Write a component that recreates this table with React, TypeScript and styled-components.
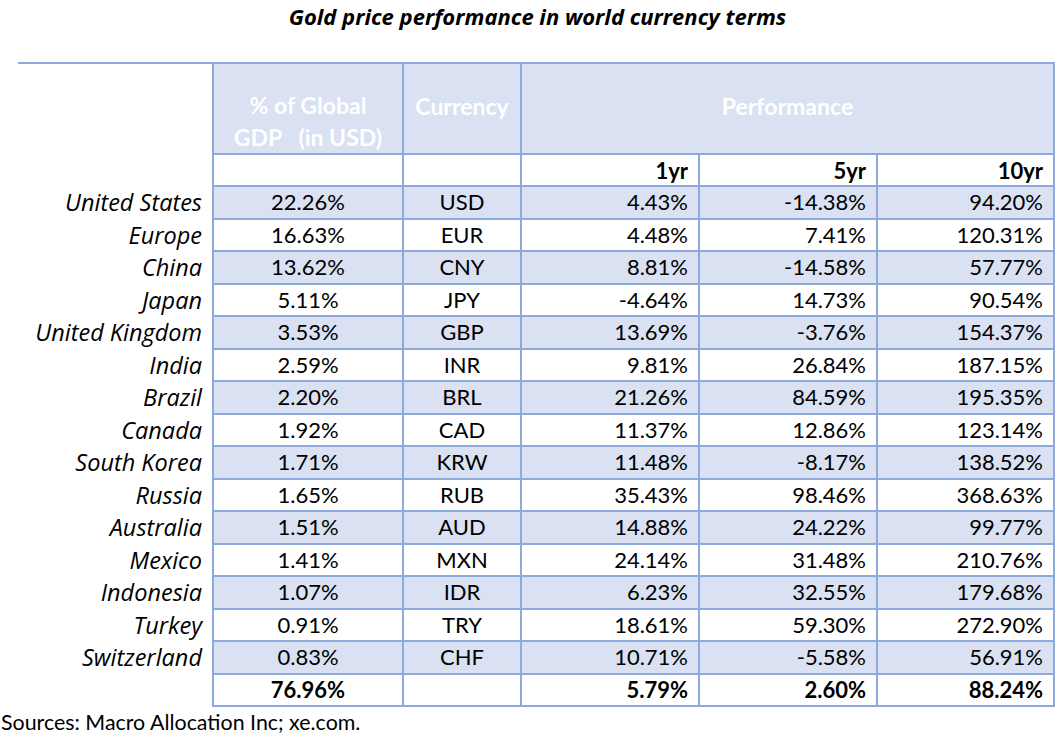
import React from "react";
import styled, { createGlobalStyle } from "styled-components";

const Global = createGlobalStyle`
  html, body { margin: 0; padding: 0; background: #fff; }
  body { font-family: Lato, "Open Sans", "Liberation Sans", sans-serif; color: #000; }
`;

const BORDER = "2px solid #8EA9DB";
const FILL = "#D9E1F2";
const ITALIC_FONT = `"Open Sans", "Noto Sans", Lato, sans-serif`;

const Page = styled.div`
  width: 1061px;
  height: 738px;
  display: flex;
  flex-direction: column;
`;

const Title = styled.h1`
  margin: 0;
  height: 62px;
  padding-top: 2px;
  box-sizing: border-box;
  text-align: center;
  font-family: ${ITALIC_FONT};
  font-size: 22px;
  font-weight: 700;
  font-style: italic;
  line-height: 28px;
  padding-left: 14px;
`;

const Table = styled.table`
  border-collapse: collapse;
  table-layout: fixed;
  width: 1036px;
  margin-left: 18px;
  font-size: 22px;
`;

const HeadRow = styled.tr`
  height: 91px;
`;

const SubRow = styled.tr`
  height: 32px;
`;

const DataRow = styled.tr`
  height: 32.5px;
`;

const Blank = styled.th<{ $top?: boolean }>`
  border: none;
  border-top: ${(p) => (p.$top ? BORDER : "none")};
  padding: 0;
`;

const HeadCell = styled.th<{ $bottom?: boolean }>`
  background: ${FILL};
  border: ${BORDER};
  color: #fff;
  font-weight: 700;
  font-size: 23px;
  text-align: center;
  vertical-align: ${(p) => (p.$bottom ? "bottom" : "middle")};
  padding: 0 0 ${(p) => (p.$bottom ? "0" : "6px")} 0;
  line-height: 32px;
  white-space: pre;
`;

const SubCell = styled.th`
  border: ${BORDER};
  background: #fff;
  text-align: right;
  font-weight: 700;
  padding: 0 10px 0 0;
  font-size: 22px;
`;

const Country = styled.td`
  text-align: right;
  font-family: ${ITALIC_FONT};
  font-style: italic;
  font-size: 23.5px;
  line-height: 28px;
  padding: 0 10px 0 0;
  border: none;
  white-space: nowrap;
`;

const Cell = styled.td<{ $fill: boolean; $align: "center" | "right"; $bold?: boolean }>`
  border: ${BORDER};
  background: ${(p) => (p.$fill ? FILL : "#fff")};
  text-align: ${(p) => p.$align};
  padding: ${(p) => (p.$align === "right" ? "0 10px 0 0" : "0")};
  font-weight: ${(p) => (p.$bold ? 700 : 400)};
  line-height: 28px;
  white-space: nowrap;
`;

const Sources = styled.div`
  font-size: 21.4px;
  line-height: 28px;
  padding-top: 1px;
  padding-left: 1px;
`;

const rows: [string, string, string, string, string, string][] = [
  ["United States", "22.26%", "USD", "4.43%", "-14.38%", "94.20%"],
  ["Europe", "16.63%", "EUR", "4.48%", "7.41%", "120.31%"],
  ["China", "13.62%", "CNY", "8.81%", "-14.58%", "57.77%"],
  ["Japan", "5.11%", "JPY", "-4.64%", "14.73%", "90.54%"],
  ["United Kingdom", "3.53%", "GBP", "13.69%", "-3.76%", "154.37%"],
  ["India", "2.59%", "INR", "9.81%", "26.84%", "187.15%"],
  ["Brazil", "2.20%", "BRL", "21.26%", "84.59%", "195.35%"],
  ["Canada", "1.92%", "CAD", "11.37%", "12.86%", "123.14%"],
  ["South Korea", "1.71%", "KRW", "11.48%", "-8.17%", "138.52%"],
  ["Russia", "1.65%", "RUB", "35.43%", "98.46%", "368.63%"],
  ["Australia", "1.51%", "AUD", "14.88%", "24.22%", "99.77%"],
  ["Mexico", "1.41%", "MXN", "24.14%", "31.48%", "210.76%"],
  ["Indonesia", "1.07%", "IDR", "6.23%", "32.55%", "179.68%"],
  ["Turkey", "0.91%", "TRY", "18.61%", "59.30%", "272.90%"],
  ["Switzerland", "0.83%", "CHF", "10.71%", "-5.58%", "56.91%"],
];

export default function App() {
  return (
    <Page>
      <Global />
      <Title>Gold price performance in world currency terms</Title>
      <Table>
        <colgroup>
          <col style={{ width: 195 }} />
          <col style={{ width: 190 }} />
          <col style={{ width: 118 }} />
          <col style={{ width: 178 }} />
          <col style={{ width: 178 }} />
          <col style={{ width: 177 }} />
        </colgroup>
        <thead>
          <HeadRow>
            <Blank $top />
            <HeadCell $bottom>{"% of Global\nGDP   (in USD)"}</HeadCell>
            <HeadCell>Currency</HeadCell>
            <HeadCell colSpan={3}>Performance</HeadCell>
          </HeadRow>
          <SubRow>
            <Blank />
            <SubCell />
            <SubCell />
            <SubCell>1yr</SubCell>
            <SubCell>5yr</SubCell>
            <SubCell>10yr</SubCell>
          </SubRow>
        </thead>
        <tbody>
          {rows.map((r, i) => {
            const fill = i % 2 === 0;
            return (
              <DataRow key={r[0]}>
                <Country>{r[0]}</Country>
                <Cell $fill={fill} $align="center">{r[1]}</Cell>
                <Cell $fill={fill} $align="center">{r[2]}</Cell>
                <Cell $fill={fill} $align="right">{r[3]}</Cell>
                <Cell $fill={fill} $align="right">{r[4]}</Cell>
                <Cell $fill={fill} $align="right">{r[5]}</Cell>
              </DataRow>
            );
          })}
          <DataRow>
            <Country />
            <Cell $fill={false} $align="center" $bold>76.96%</Cell>
            <Cell $fill={false} $align="center" />
            <Cell $fill={false} $align="right" $bold>5.79%</Cell>
            <Cell $fill={false} $align="right" $bold>2.60%</Cell>
            <Cell $fill={false} $align="right" $bold>88.24%</Cell>
          </DataRow>
        </tbody>
      </Table>
      <Sources>Sources: Macro Allocation Inc; xe.com.</Sources>
    </Page>
  );
}
